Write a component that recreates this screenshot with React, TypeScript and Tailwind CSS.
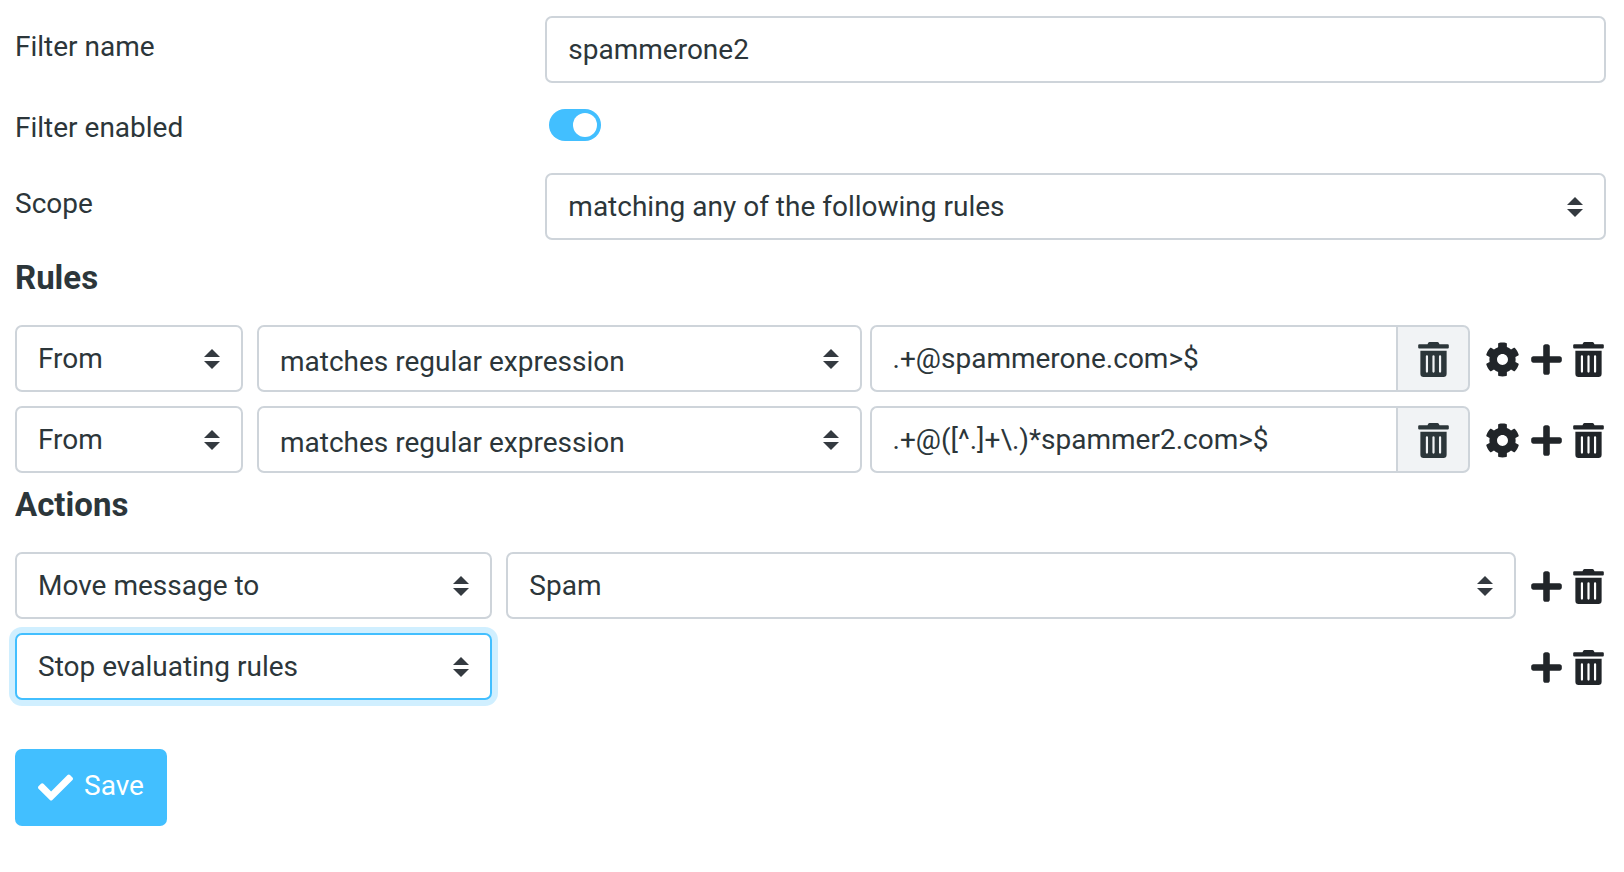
import { useState } from "react";
import type { ReactNode, SelectHTMLAttributes } from "react";
import { FaCheck, FaCog, FaPlus, FaTrashAlt } from "react-icons/fa";
import clsx from "clsx";

const fieldClass =
  "block w-full h-[67px] rounded-[7px] border-2 bg-white px-[21px] text-[28px] text-[#2c363a] outline-none focus:border-[#42bfff] focus:ring-6 focus:ring-[#42bfff]/25";

type SelectProps = SelectHTMLAttributes<HTMLSelectElement> & {
  options: string[];
  highlighted?: boolean;
};

const Select = ({ options, highlighted, className, ...props }: SelectProps) => (
  <div className="relative w-full">
    <select
      className={clsx(
        fieldClass,
        "appearance-none",
        highlighted ? "border-[#42bfff] ring-6 ring-[#42bfff]/25" : "border-[#ced4da]",
        className
      )}
      {...props}
    >
      {options.map((option) => (
        <option key={option}>{option}</option>
      ))}
    </select>
    <svg
      viewBox="0 0 4 5"
      className="pointer-events-none absolute inset-y-0 right-[23px] my-auto h-5 w-4"
      fill="#343a40"
      aria-hidden="true"
    >
      <path d="M2 0L0 2h4zm0 5L0 3h4z" />
    </svg>
  </div>
);

const FormRow = ({ id, label, children }: { id: string; label: string; children: ReactNode }) => (
  <div className="flex">
    <label htmlFor={id} className="w-1/3 shrink-0 py-[10px] leading-[42px]">
      {label}
    </label>
    <div className="w-2/3">{children}</div>
  </div>
);

const RowButtons = ({ advanced }: { advanced?: boolean }) => (
  <div className="ml-auto flex shrink-0 items-center gap-[11px] pt-0.5 pr-0.5 pl-[15px] text-[#212529]">
    {advanced && (
      <button type="button" aria-label="Advanced options">
        <FaCog className="h-[35px] w-[35px]" />
      </button>
    )}
    <button type="button" aria-label="Add">
      <FaPlus className="h-[35px] w-[31px]" />
    </button>
    <button type="button" aria-label="Delete">
      <FaTrashAlt className="h-[35px] w-[31px]" />
    </button>
  </div>
);

const RuleRow = ({ value }: { value: string }) => {
  const [text, setText] = useState(value);

  return (
    <div className="flex">
      <div className="mr-[14px] w-[228px] shrink-0">
        <Select aria-label="Header" options={["From", "To", "Subject"]} />
      </div>
      <div className="mr-2 w-[38%] shrink-0">
        <Select
          aria-label="Operator"
          className="pt-1.5"
          options={["matches regular expression", "contains", "is equal to"]}
        />
      </div>
      <div className="flex min-w-0 flex-1">
        <input
          type="text"
          aria-label="Value"
          value={text}
          onChange={(e) => setText(e.target.value)}
          className={clsx(fieldClass, "min-w-0 rounded-r-none border-r-0 border-[#ced4da]")}
        />
        <button
          type="button"
          aria-label="Clear value"
          onClick={() => setText("")}
          className="flex w-[74px] shrink-0 items-center justify-center rounded-r-[7px] border-2 border-[#ced4da] bg-[#f1f3f5] pt-0.5"
        >
          <FaTrashAlt className="h-[35px] w-[31px]" />
        </button>
      </div>
      <RowButtons advanced />
    </div>
  );
};

const App = () => {
  return (
    <form
      className="min-h-screen bg-white pt-4 pr-[18px] pb-10 pl-[15px] font-['Roboto',sans-serif] text-[28px] text-[#2c363a]"
      onSubmit={(e) => e.preventDefault()}
    >
      <div className="flex flex-col gap-[14px]">
        <FormRow id="name" label="Filter name">
          <input
            id="name"
            type="text"
            defaultValue="spammerone2"
            className={clsx(fieldClass, "border-[#ced4da]")}
          />
        </FormRow>
        <FormRow id="enabled" label="Filter enabled">
          <input
            id="enabled"
            type="checkbox"
            role="switch"
            defaultChecked
            className="mt-3 ml-1 flex h-8 w-[52px] appearance-none rounded-full bg-[#adb5bd] p-1 before:size-6 before:rounded-full before:bg-white checked:bg-[#42bfff] checked:before:ml-5"
          />
        </FormRow>
        <FormRow id="scope" label="Scope">
          <Select
            id="scope"
            options={[
              "matching any of the following rules",
              "matching all of the following rules",
              "all messages",
            ]}
          />
        </FormRow>
      </div>

      <h2 className="mt-[18px] mb-[27px] text-[33px] leading-[40px] font-bold">Rules</h2>
      <div className="flex flex-col gap-[14px]">
        <RuleRow value=".+@spammerone.com>$" />
        <RuleRow value=".+@([^.]+\.)*spammer2.com>$" />
      </div>

      <h2 className="mt-3 mb-[27px] text-[33px] leading-[40px] font-bold">Actions</h2>
      <div className="flex flex-col gap-[14px]">
        <div className="flex">
          <div className="mr-[14px] w-[30%] shrink-0">
            <Select aria-label="Action" options={["Move message to", "Copy message to"]} />
          </div>
          <div className="min-w-0 flex-1">
            <Select aria-label="Folder" options={["Spam", "Inbox", "Trash"]} />
          </div>
          <RowButtons />
        </div>
        <div className="flex">
          <div className="w-[30%] shrink-0">
            <Select
              aria-label="Action"
              highlighted
              options={["Stop evaluating rules", "Keep message in Inbox"]}
            />
          </div>
          <RowButtons />
        </div>
      </div>

      <button
        type="submit"
        className="mt-[49px] flex h-[77px] items-center gap-[11px] rounded-[7px] bg-[#42bfff] px-[23px] text-white"
      >
        <FaCheck className="size-[35px]" />
        <span className="pb-1">Save</span>
      </button>
    </form>
  );
};

export default App;
